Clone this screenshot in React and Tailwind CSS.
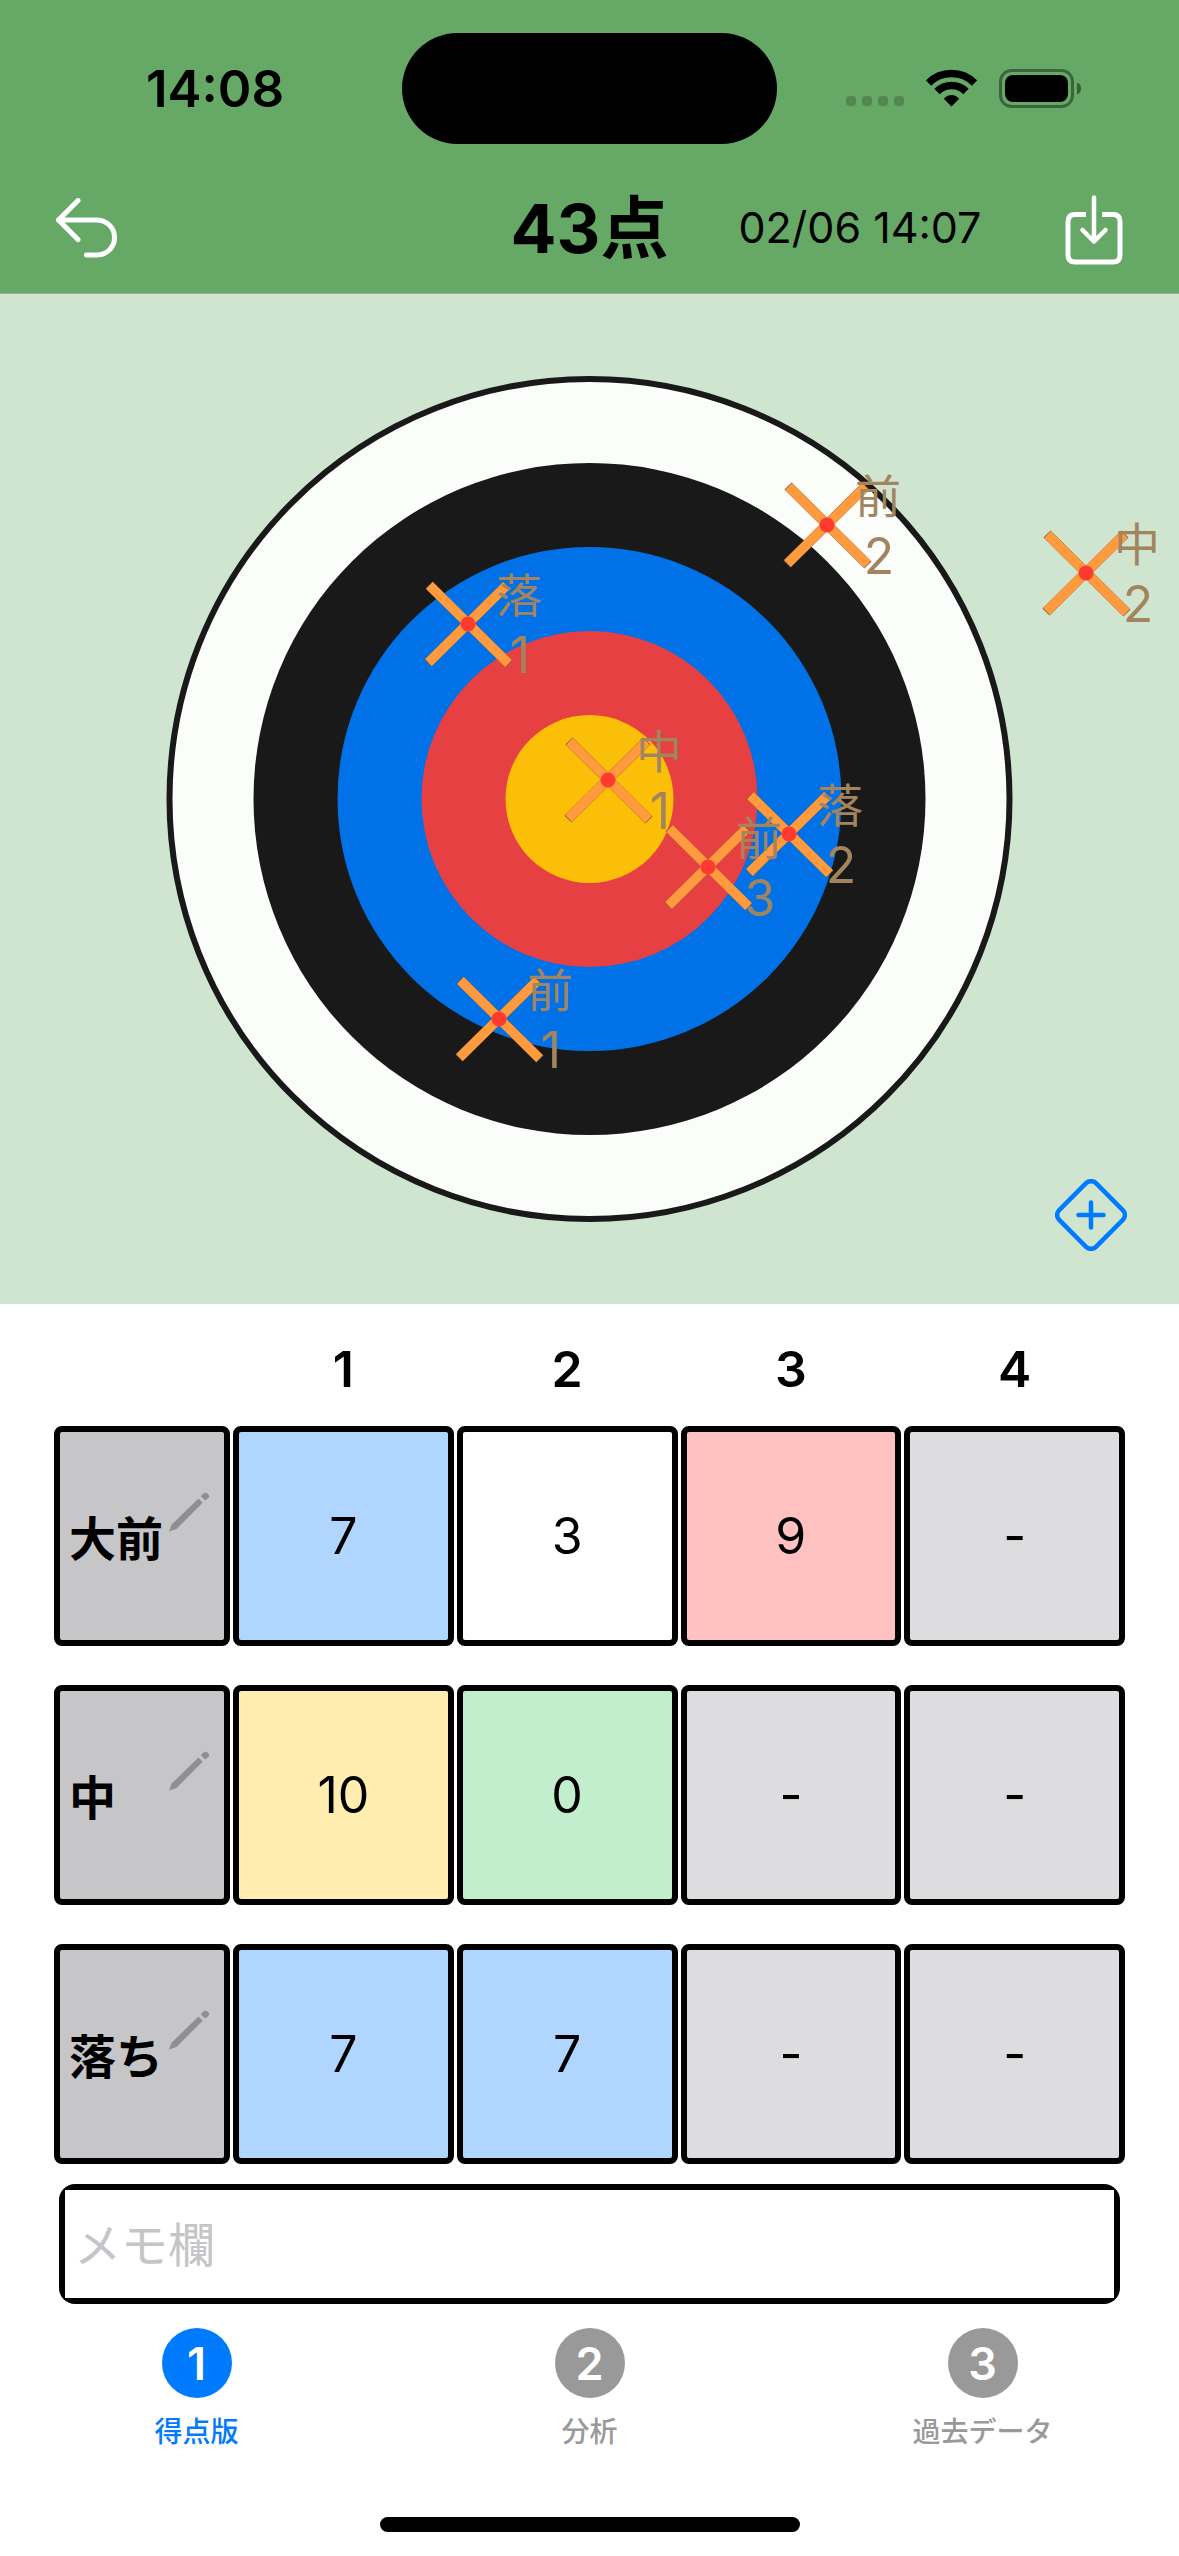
import React from "react";

const SHOTS = [
  { who: "前", no: 1, x: 499, y: 726 },
  { who: "前", no: 2, x: 827, y: 232 },
  { who: "落", no: 1, x: 468, y: 331 },
  { who: "落", no: 2, x: 789, y: 541 },
  { who: "中", no: 1, x: 608, y: 487 },
  { who: "中", no: 2, x: 1086, y: 280 },
  { who: "前", no: 3, x: 708, y: 574 },
];

const BLUE = "bg-[#b0d6ff]";
const WHITE = "bg-white";
const RED = "bg-[#ffc2c1]";
const YELLOW = "bg-[#ffeeb0]";
const GREEN = "bg-[#c2eecd]";
const EMPTY = "bg-[#dddddf]";

const ROWS = [
  { name: "大前", cells: [["7", BLUE], ["3", WHITE], ["9", RED], ["-", EMPTY]] },
  { name: "中", cells: [["10", YELLOW], ["0", GREEN], ["-", EMPTY], ["-", EMPTY]] },
  { name: "落ち", cells: [["7", BLUE], ["7", BLUE], ["-", EMPTY], ["-", EMPTY]] },
];

const TABS = [
  { no: 1, label: "得点版", active: true },
  { no: 2, label: "分析", active: false },
  { no: 3, label: "過去データ", active: false },
];

function StatusBar() {
  return (
    <div className="grid h-[176px] grid-cols-[1fr_375px_1fr] items-center">
      <div className="pl-7 text-center text-[51px] leading-none font-semibold">14:08</div>
      <div className="h-[111px] rounded-full bg-black" />
      <div className="flex items-center justify-end pr-[98px]">
        <svg width="58" height="38" viewBox="0 0 58 38" className="mr-[22px]" aria-hidden="true">
          {[0, 16, 32, 48].map((x) => (
            <rect key={x} x={x} y="27" width="10" height="10" rx="4" fill="#000" opacity="0.2" />
          ))}
        </svg>
        <svg width="51" height="38" viewBox="0 0 51 38" className="mr-[22px]" aria-label="Wi-Fi">
          <path d="M2.5 14A32.5 32.5 0 0 1 48.5 14" fill="none" stroke="#000" strokeWidth="7.5" />
          <path d="M11 22.5A20.5 20.5 0 0 1 40 22.5" fill="none" stroke="#000" strokeWidth="7.5" />
          <path d="M25.5 37.5L17.8 29.8Q21 26 25.5 26T33.2 29.8Z" />
        </svg>
        <svg width="82" height="39" viewBox="0 0 82 39" aria-label="Battery">
          <rect x="1.5" y="1.5" width="72" height="36" rx="11" fill="none" stroke="#000" strokeWidth="3" opacity="0.4" />
          <rect x="6" y="6" width="63" height="27" rx="8" />
          <path d="M78 13.5Q82 15 82 19.500T78 25.500Z" opacity="0.45" />
        </svg>
      </div>
    </div>
  );
}

function NavBar() {
  return (
    <div className="grid h-[118px] grid-cols-[1fr_auto_1fr] items-center border-b border-[#93b095] px-[56px] pb-[14px]">
      <button type="button" aria-label="戻る" className="justify-self-start">
        <svg width="62" height="60" viewBox="0 0 62 60" fill="none" stroke="#fff" strokeWidth="5" strokeLinecap="round" strokeLinejoin="round">
          <path d="M22 2.500L2.500 22L22 41.500" />
          <path d="M2.500 22H40C51 22 58.500 29.500 58.500 39.500S51 57 40 57H30.500" />
        </svg>
      </button>
      <h1 className="text-[68px] leading-none font-bold">43点</h1>
      <div className="flex items-center justify-between pl-[70px]">
        <time className="text-[43px] leading-none whitespace-nowrap">02/06 14:07</time>
        <button type="button" aria-label="保存" className="pt-1">
          <svg width="58" height="70" viewBox="0 0 58 70" fill="none" stroke="#fff" strokeWidth="5" strokeLinecap="round" strokeLinejoin="round">
            <path strokeLinecap="butt" d="M21 19.500H10Q3 19.500 3 26.500V60Q3 67 10 67H48Q55 67 55 60V26.500Q55 19.500 48 19.500H37" />
            <path d="M29 2.500V46M17.500 35L29 46.500L40.500 35" strokeWidth="4.5" />
          </svg>
        </button>
      </div>
    </div>
  );
}

function Target() {
  return (
    <section className="relative bg-[#cfe5d0]">
      <svg viewBox="0 1 1179 1010" className="block h-auto w-full" role="img" aria-label="的">
        <circle cx="589.5" cy="506" r="420" fill="#fbfdfa" stroke="#191919" strokeWidth="6" />
        <circle cx="589.5" cy="506" r="336" fill="#191919" />
        <circle cx="589.5" cy="506" r="252" fill="#0171e8" />
        <circle cx="589.5" cy="506" r="168" fill="#e74042" />
        <circle cx="589.5" cy="506" r="84" fill="#fcbf07" />
        {SHOTS.map((s) => (
          <g key={s.who + s.no} transform={`translate(${s.x} ${s.y})`}>
            <path d="M-39 -39L41 40M39 -39L-40 39" stroke="#8a5a2a" strokeWidth="10" />
            <path d="M-38.500 -38.500L40.500 39.500M38.500 -38.500L-39.500 38.500" stroke="#ff9b3e" strokeWidth="9.500" />
            <circle r="7.500" fill="#ff3b30" />
          </g>
        ))}
        {SHOTS.map((s) => (
          <g key={s.who + s.no} transform={`translate(${s.x} ${s.y})`} fill="#a2845e" textAnchor="middle">
            <text x="51" y="-12" className="text-[46px] font-normal">{s.who}</text>
            <text x="52" y="49" className="text-[50px] font-normal">{s.no}</text>
          </g>
        ))}
      </svg>
      <button type="button" aria-label="追加" className="absolute right-[52px] bottom-[53px]">
        <svg width="72" height="72" viewBox="-36 -36 72 72" fill="none" stroke="#007aff" strokeWidth="4.500" strokeLinecap="round">
          <rect x="-26" y="-26" width="52" height="52" rx="7" transform="rotate(45)" />
          <path d="M-12.500 0H12.500M0 -12.500V12.500" />
        </svg>
      </button>
    </section>
  );
}

function Pencil() {
  return (
    <svg width="41" height="40" viewBox="0 0 41 40" fill="#8e8e93">
      <path d="M0 39.500L2.500 32.800L29.500 6.500L33.700 10.700L7.500 37Z" />
      <path d="M31.800 4.200L34 2Q36.500 -0.500 39 2T39 6.200L36.200 8.600Z" />
    </svg>
  );
}

function ScoreTable() {
  return (
    <div className="px-[51px]">
      <table className="w-full table-fixed border-separate border-spacing-x-[3px] border-spacing-y-0">
        <colgroup>
          <col className="w-[176px]" />
          <col />
          <col />
          <col />
          <col />
        </colgroup>
        <thead>
          <tr className="h-[122px]">
            <td />
            {[1, 2, 3, 4].map((n) => (
              <th key={n} scope="col" className="pt-2 text-[50px] leading-none font-semibold">{n}</th>
            ))}
          </tr>
        </thead>
        <tbody>
          {ROWS.map((row) => (
            <tr key={row.name} className="group">
              <th scope="row" className="p-0 pb-[39px] group-last:pb-5">
                <div className="flex h-[220px] items-center justify-between rounded-lg border-6 border-black bg-[#c6c6c8] pl-[9px] pr-[14px]">
                  <span className="pt-1 text-[47px] leading-none font-bold whitespace-nowrap">{row.name}</span>
                  <button type="button" aria-label={`${row.name}を編集`} className="-ml-2 pb-12">
                    <Pencil />
                  </button>
                </div>
              </th>
              {row.cells.map(([value, tone], i) => (
                <td key={i} className="p-0 pb-[39px] group-last:pb-5">
                  <button
                    type="button"
                    className={`flex h-[220px] w-full items-center justify-center rounded-lg border-6 border-black text-[50px] leading-none ${tone}`}
                  >
                    {value}
                  </button>
                </td>
              ))}
            </tr>
          ))}
        </tbody>
      </table>
    </div>
  );
}

function Memo() {
  return (
    <div className="mx-[59px] rounded-[16px] bg-black p-[6px]">
      <input
        type="text"
        aria-label="メモ欄"
        placeholder="メモ欄"
        className="block h-[108px] w-full bg-white px-[9px] text-[47px] outline-none placeholder:text-[#c5c5c7]"
      />
    </div>
  );
}

function TabBar() {
  return (
    <nav className="grid grid-cols-3 pt-6">
      {TABS.map((t) => (
        <button
          key={t.no}
          type="button"
          className={`flex flex-col items-center gap-4 ${t.active ? "text-[#007aff]" : "text-[#999999]"}`}
        >
          <span className={`flex size-[70px] items-center justify-center rounded-full ${t.active ? "bg-[#007aff]" : "bg-[#999999]"}`}>
            <span className="text-[45px] leading-none font-semibold text-white">{t.no}</span>
          </span>
          <span className="text-[28px] leading-9 font-medium">{t.label}</span>
        </button>
      ))}
    </nav>
  );
}

export default function App() {
  return (
    <div
      lang="ja"
      className="flex min-h-screen flex-col bg-white font-[Inter,'Noto_Sans_CJK_JP',sans-serif] text-black"
    >
      <header className="bg-[#66a966]">
        <StatusBar />
        <NavBar />
      </header>
      <main>
        <Target />
        <ScoreTable />
        <Memo />
      </main>
      <TabBar />
      <div className="mt-auto flex justify-center pb-6">
        <div className="h-[15px] w-[420px] rounded-full bg-black" />
      </div>
    </div>
  );
}
